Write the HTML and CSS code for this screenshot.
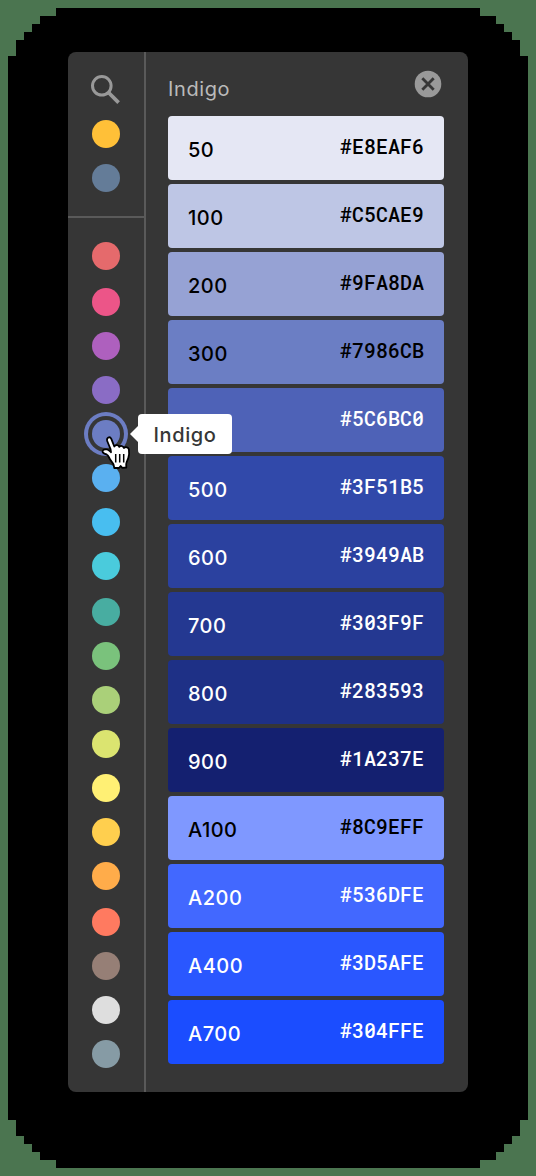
FILE: index.html
```
<!DOCTYPE html>
<html lang="en">
<head>
<meta charset="utf-8">
<title>Color palette</title>
<link rel="stylesheet" href="styles.css">
</head>
<body>
<div class="backdrop">
<main class="panel">
  <nav class="rail">
    <div class="tools">
      <svg class="search" width="32" height="32" viewBox="0 0 32 32"><circle cx="11.8" cy="12.800" r="9.300" fill="none" stroke="#999" stroke-width="3"/><path d="M18 19 28.600 29.600" stroke="#999" stroke-width="3.700"/></svg>
      <i class="dot amber-top"></i>
      <i class="dot slate"></i>
    </div>
    <div class="hues">
      <i class="dot red"></i>
      <i class="dot pink nudge"></i>
      <i class="dot purple"></i>
      <i class="dot violet"></i>
      <div class="dot indigo selected">
        <div class="tooltip">Indigo</div>
        <svg class="cursor" width="32" height="35" viewBox="0 0 32 35"><path d="M10.500 25C9 23 8.500 20.500 7 19.800 5.500 19 3.500 18.600 2.700 17.200 2 15 4.500 13.800 7 14.500 8.800 15 10 16.500 11 17.200L10.500 14 7.200 6C6.300 2.500 9.800 1 11.300 3.800L14.300 11.500C15.500 9.500 18.500 9.800 19.300 11.800 20.500 10.400 23.400 10.800 24 13 25.700 11.500 28.500 12.300 28.900 14.500 29.500 18 29.200 20 28.300 23 27.500 25.500 26.300 27 26.200 29L26.300 32.500 22.300 32.800 20.700 31 19 33 14.300 33 13.500 29.500C12.800 28 11.500 26.500 10.500 25Z" fill="#fff" stroke="#000" stroke-width="1.800" stroke-linejoin="round"/><path d="M15.700 19v8.500M19.700 19v8.500M23.700 19v8.500" stroke="#000" stroke-width="1.500"/></svg>
      </div>
      <i class="dot blue"></i>
      <i class="dot sky"></i>
      <i class="dot cyan"></i>
      <i class="dot teal nudge"></i>
      <i class="dot green"></i>
      <i class="dot light-green"></i>
      <i class="dot lime"></i>
      <i class="dot yellow"></i>
      <i class="dot amber"></i>
      <i class="dot orange"></i>
      <i class="dot coral nudge"></i>
      <i class="dot brown"></i>
      <i class="dot gray"></i>
      <i class="dot blue-gray"></i>
    </div>
  </nav>
  <section class="content">
    <header class="head">
      <h1 class="title">Indigo</h1>
      <svg class="close" width="28" height="28" viewBox="0 0 28 28"><circle cx="14" cy="14" r="13.300" fill="#999"/><path d="m8.300 8.300 11.400 11.400M19.700 8.300 8.300 19.700" stroke="#363636" stroke-width="2.800"/></svg>
    </header>
    <div class="swatches">
      <div class="swatch s50"><span class="shade">50</span><svg class="hex" viewBox="0 0 84 24"><text x="6 18 30 42 54 66 78" y="18">#E8EAF6</text></svg></div>
      <div class="swatch s100"><span class="shade">100</span><svg class="hex" viewBox="0 0 84 24"><text x="6 18 30 42 54 66 78" y="18">#C5CAE9</text></svg></div>
      <div class="swatch s200"><span class="shade">200</span><svg class="hex" viewBox="0 0 84 24"><text x="6 18 30 42 54 66 78" y="18">#9FA8DA</text></svg></div>
      <div class="swatch s300"><span class="shade">300</span><svg class="hex" viewBox="0 0 84 24"><text x="6 18 30 42 54 66 78" y="18">#7986CB</text></svg></div>
      <div class="swatch s400"><span class="shade">400</span><svg class="hex" viewBox="0 0 84 24"><text x="6 18 30 42 54 66 78" y="18">#5C6BC0</text><path class="slash" d="m75.500 13.500 5-5"/></svg></div>
      <div class="swatch s500"><span class="shade">500</span><svg class="hex" viewBox="0 0 84 24"><text x="6 18 30 42 54 66 78" y="18">#3F51B5</text></svg></div>
      <div class="swatch s600"><span class="shade">600</span><svg class="hex" viewBox="0 0 84 24"><text x="6 18 30 42 54 66 78" y="18">#3949AB</text></svg></div>
      <div class="swatch s700"><span class="shade">700</span><svg class="hex" viewBox="0 0 84 24"><text x="6 18 30 42 54 66 78" y="18">#303F9F</text><path class="slash" d="m27.500 13.500 5-5"/></svg></div>
      <div class="swatch s800"><span class="shade">800</span><svg class="hex" viewBox="0 0 84 24"><text x="6 18 30 42 54 66 78" y="18">#283593</text></svg></div>
      <div class="swatch s900"><span class="shade">900</span><svg class="hex" viewBox="0 0 84 24"><text x="6 18 30 42 54 66 78" y="18">#1A237E</text></svg></div>
      <div class="swatch a100"><span class="shade">A100</span><svg class="hex" viewBox="0 0 84 24"><text x="6 18 30 42 54 66 78" y="18">#8C9EFF</text></svg></div>
      <div class="swatch a200"><span class="shade">A200</span><svg class="hex" viewBox="0 0 84 24"><text x="6 18 30 42 54 66 78" y="18">#536DFE</text></svg></div>
      <div class="swatch a400"><span class="shade">A400</span><svg class="hex" viewBox="0 0 84 24"><text x="6 18 30 42 54 66 78" y="18">#3D5AFE</text></svg></div>
      <div class="swatch a700"><span class="shade">A700</span><svg class="hex" viewBox="0 0 84 24"><text x="6 18 30 42 54 66 78" y="18">#304FFE</text><path class="slash" d="m27.500 13.500 5-5"/></svg></div>
    </div>
  </section>
</main>
</div>
</body>
</html>
```

FILE: styles.css
```
* { box-sizing: border-box; }
body { margin: 0; background: #4b7550; font-family: Inter, sans-serif; }
.backdrop {
  width: 536px; height: 1176px; padding: 52px 68px 84px; background: #000;
  clip-path: polygon(56px 8px, 480px 8px, 480px 16px, 496px 16px, 496px 24px, 504px 24px, 504px 32px, 512px 32px, 512px 40px, 520px 40px, 520px 56px, 528px 56px, 528px 1120px, 520px 1120px, 520px 1136px, 512px 1136px, 512px 1144px, 504px 1144px, 504px 1152px, 496px 1152px, 496px 1160px, 480px 1160px, 480px 1168px, 56px 1168px, 56px 1160px, 40px 1160px, 40px 1152px, 32px 1152px, 32px 1144px, 24px 1144px, 24px 1136px, 16px 1136px, 16px 1120px, 8px 1120px, 8px 56px, 16px 56px, 16px 40px, 24px 40px, 24px 32px, 32px 32px, 32px 24px, 40px 24px, 40px 16px, 56px 16px);
}
.panel { display: flex; height: 1040px; background: #363636; border-radius: 8px; }
.rail { width: 78px; border-right: 2px solid #5a5a5a; }
.tools { height: 166px; border-bottom: 2px solid #5a5a5a; padding-top: 21px; display: flex; flex-direction: column; align-items: center; gap: 16px; }
.search { flex: none; margin-bottom: -1px; }
.hues { padding-top: 24px; display: flex; flex-direction: column; align-items: center; gap: 16px; }
.dot { display: block; flex: none; width: 28px; height: 28px; border-radius: 50%; }
.nudge { margin-top: 2px; }
.amber-top { background: #ffc038; }
.slate { background: #647c98; }
.red { background: #e56a6c; }
.pink { background: #ec5588; }
.purple { background: #ae60be; }
.violet { background: #8a6cc5; }
.indigo { background: #6c7dc3; }
.blue { background: #5ab0f0; }
.sky { background: #48bef0; }
.cyan { background: #4acbdc; }
.teal { background: #48ada1; }
.green { background: #7ac27c; }
.light-green { background: #aad079; }
.lime { background: #dbe470; }
.yellow { background: #fff074; }
.amber { background: #ffcf4e; }
.orange { background: #ffac4a; }
.coral { background: #ff7a60; }
.brown { background: #967f76; }
.gray { background: #dedede; }
.blue-gray { background: #869ba5; }
.selected { position: relative; z-index: 1; box-shadow: 0 0 0 4px #363636, 0 0 0 8px #6c7dc3; }
.tooltip {
  position: absolute; left: 46px; top: -6px; width: 94px; height: 40px; border-radius: 4px;
  background: #fff; color: #363636; font-size: 20px; font-weight: 450; letter-spacing: .6px;
  line-height: 42px; text-align: center;
}
.tooltip::before { content: ""; position: absolute; left: -8px; top: 12px; border: 8px solid transparent; border-left: 0; border-right-color: #fff; }
.cursor { position: absolute; left: 8px; top: 15px; }
.content { flex: 1; padding: 0 24px 0 22px; }
.head { height: 64px; padding-top: 18px; display: flex; justify-content: space-between; align-items: flex-start; }
.title { margin: 7px 0 0; font-size: 20px; line-height: 24px; font-weight: 400; letter-spacing: .6px; color: #bababa; }
.close { margin-right: 2px; }
.swatches { display: grid; gap: 4px; }
.swatch { height: 64px; border-radius: 4px; padding: 0 20px; display: flex; align-items: center; justify-content: space-between; color: #fff; }
.shade { font-size: 20px; line-height: 24px; font-weight: 450; letter-spacing: .5px; padding-top: 3px; }
.hex { width: 84px; height: 24px; overflow: visible; fill: currentColor; font-family: "Roboto Mono", Roboto, sans-serif; font-size: 20px; font-weight: 500; text-anchor: middle; }
.slash { stroke: currentColor; stroke-width: 1.5; }
.s50, .s100, .s200, .s300, .a100 { color: #000; }
.s50 { background: #e5e7f4; }
.s100 { background: #bec6e5; }
.s200 { background: #96a2d4; }
.s300 { background: #6b7ec4; }
.s400 { background: #4e62b7; }
.s500 { background: #3149aa; }
.s600 { background: #2b419f; }
.s700 { background: #243891; }
.s800 { background: #1e3086; }
.s900 { background: #142070; }
.a100 { background: #7f98ff; }
.a200 { background: #4268ff; }
.a400 { background: #2a57ff; }
.a700 { background: #1b4dff; }
```
